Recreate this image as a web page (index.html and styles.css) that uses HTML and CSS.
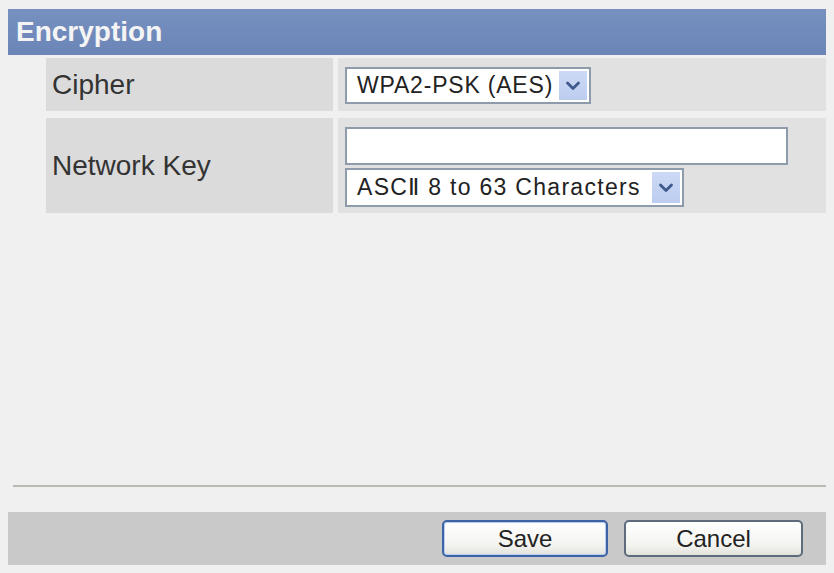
FILE: index.html
```html
<!DOCTYPE html>
<html lang="en">
<head>
<meta charset="utf-8">
<title>Encryption</title>
<link rel="stylesheet" href="styles.css">
</head>
<body>
<div class="page">
  <div class="header">Encryption</div>
  <div class="form">
    <div class="label">Cipher</div>
    <div class="value">
      <div class="select sel-cipher">
        <span class="sel-text">WPA2-PSK (AES)</span>
        <span class="sel-arrow"><svg width="16" height="11" viewBox="0 0 16 11"><path d="M2.5 3 L8 8.5 L13.5 3" fill="none" stroke="#3f5a8c" stroke-width="2.8" stroke-linecap="round" stroke-linejoin="round"/></svg></span>
      </div>
    </div>
    <div class="label">Network Key</div>
    <div class="value value-stack">
      <div class="textbox"></div>
      <div class="select sel-key">
        <span class="sel-text">ASCⅡ 8 to 63 Characters</span>
        <span class="sel-arrow"><svg width="16" height="11" viewBox="0 0 16 11"><path d="M2.5 3 L8 8.5 L13.5 3" fill="none" stroke="#3f5a8c" stroke-width="2.8" stroke-linecap="round" stroke-linejoin="round"/></svg></span>
      </div>
    </div>
  </div>
  <div class="spacer"></div>
  <div class="divider"></div>
  <div class="footer">
    <button class="btn btn-save">Save</button>
    <button class="btn btn-cancel">Cancel</button>
  </div>
</div>
</body>
</html>
```
FILE: styles.css
```css
html, body {
  margin: 0;
  padding: 0;
  background: #f0f0f0;
}
body {
  font-family: "Liberation Sans", Arial, sans-serif;
}
.page {
  height: 573px;
  box-sizing: border-box;
  padding: 9px 8px 8px 8px;
  display: flex;
  flex-direction: column;
}
.header {
  height: 46px;
  box-sizing: border-box;
  background: linear-gradient(#7690c0, #6b85b7);
  color: #f4f4f4;
  font-weight: bold;
  font-size: 28px;
  line-height: 46px;
  padding-left: 8px;
}
.form {
  margin-top: 3px;
  margin-left: 38px;
  display: grid;
  grid-template-columns: 287px 1fr;
  grid-template-rows: 53px 95px;
  column-gap: 5px;
  row-gap: 7px;
}
.label {
  background: #dbdbdb;
  color: #333;
  font-size: 28px;
  display: flex;
  align-items: center;
  padding-left: 6px;
}
.value {
  background: #e1e1e1;
  padding: 9px 0 0 7px;
  box-sizing: border-box;
}
.value-stack {
  display: flex;
  flex-direction: column;
  gap: 3px;
}
.select {
  display: flex;
  align-items: center;
  box-sizing: border-box;
  height: 37px;
  background: #fff;
  border: 2px solid #8e9bab;
  padding: 2px;
}
.sel-cipher { width: 246px; }
.sel-key { width: 339px; height: 39px; }
.sel-text {
  flex: 1;
  padding-left: 8px;
  font-size: 23px;
  letter-spacing: 0.8px;
  color: #222;
  white-space: nowrap;
}
.sel-key .sel-text { letter-spacing: 1.3px; }
.sel-arrow {
  width: 28px;
  align-self: stretch;
  background: linear-gradient(#cdd9f5, #bccdf0);
  display: flex;
  align-items: center;
  justify-content: center;
}
.textbox {
  width: 443px;
  height: 38px;
  box-sizing: border-box;
  background: #fff;
  border: 2px solid #8e9bab;
}
.spacer { flex: 1; }
.divider {
  height: 2px;
  margin-left: 5px;
  background: #b9b9b0;
}
.footer {
  margin-top: 25px;
  height: 53px;
  background: #c9c9c9;
  display: flex;
  justify-content: flex-end;
  align-items: center;
  gap: 16px;
  padding-right: 23px;
}
.btn {
  height: 37px;
  box-sizing: border-box;
  border: 2px solid #5d6b7c;
  border-radius: 5px;
  background: linear-gradient(#ffffff, #f3f3f0 70%, #e2e2dc);
  font-family: "Liberation Sans", Arial, sans-serif;
  font-size: 24px;
  color: #222;
  padding: 0;
}
.btn-save {
  width: 166px;
  border-color: #3c63a6;
  box-shadow: inset 0 0 0 1px #b8cdf0;
}
.btn-cancel { width: 179px; }
```
